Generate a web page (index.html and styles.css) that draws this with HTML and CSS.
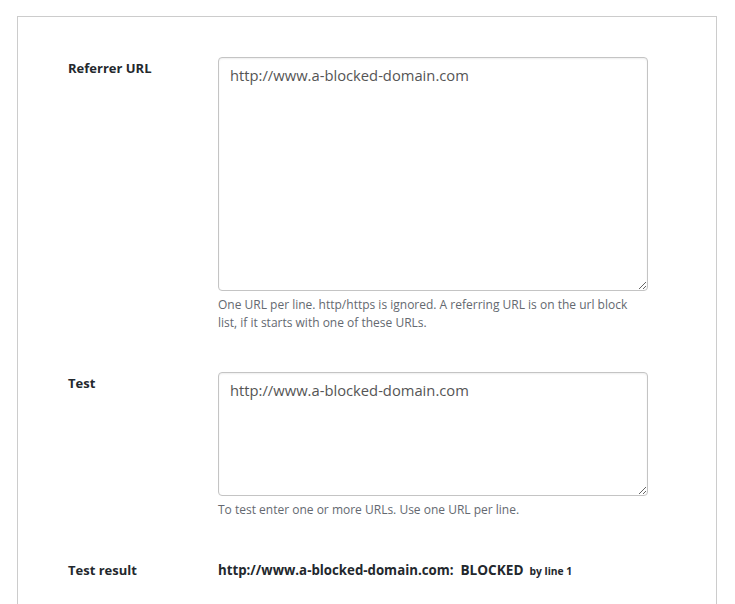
FILE: index.html
```html
<!DOCTYPE html>
<html>
<head>
<meta charset="utf-8">
<link rel="stylesheet" href="styles.css">
</head>
<body>
<div class="page">
  <div class="panel">
    <div class="form">
      <div class="row">
        <div class="label">Referrer URL</div>
        <div class="field">
          <textarea class="input tall">http://www.a-blocked-domain.com</textarea>
          <p class="desc">One URL per line. http/https is ignored. A referring URL is on the url block list, if it starts with one of these URLs.</p>
        </div>
      </div>
      <div class="row">
        <div class="label">Test</div>
        <div class="field">
          <textarea class="input short">http://www.a-blocked-domain.com</textarea>
          <p class="desc">To test enter one or more URLs. Use one URL per line.</p>
        </div>
      </div>
      <div class="row">
        <div class="label">Test result</div>
        <div class="field result">
          <span class="url">http://www.a-blocked-domain.com:</span>
          <span class="status">BLOCKED</span>
          <span class="line">by line 1</span>
        </div>
      </div>
    </div>
  </div>
</div>
</body>
</html>
```

FILE: styles.css
```css
html, body {
  margin: 0;
  padding: 0;
  background: #ffffff;
  overflow: hidden;
}
body {
  font-family: "Open Sans", "Noto Sans", sans-serif;
  color: #32373c;
}
.page {
  padding: 16px 18px 0 17px;
}
.panel {
  box-sizing: border-box;
  border: 1px solid #cccccc;
  border-bottom: none;
  height: 588px;
  padding: 20px 0 0 50px;
}
.form {
  display: flex;
  flex-direction: column;
  gap: 40px;
}
.row {
  display: grid;
  grid-template-columns: 150px 430px;
}
.row:first-child {
  margin-top: 20px;
}
.label {
  font-size: 13px;
  font-weight: 700;
  line-height: 20px;
  padding-top: 1px;
  color: #23282d;
}
.field {
  display: flex;
  flex-direction: column;
}
.input {
  box-sizing: border-box;
  width: 430px;
  margin: 0;
  border: 1px solid #c4c4c4;
  border-radius: 4px;
  box-shadow: inset 0 1px 2px rgba(0, 0, 0, 0.07);
  padding: 7px 11px;
  font-family: "Open Sans", "Noto Sans", sans-serif;
  font-size: 14.75px;
  line-height: 20px;
  color: #555555;
  background: #ffffff;
  resize: both;
}
.tall {
  height: 234px;
}
.short {
  height: 124px;
}
.desc {
  margin: 5px 0 0 0;
  font-size: 12px;
  line-height: 18px;
  color: #646970;
}
.result {
  flex-direction: row;
  align-items: baseline;
  padding-top: 1px;
  line-height: 20px;
  font-weight: 700;
  color: #23282d;
}
.url {
  font-size: 13.25px;
}
.status {
  font-size: 13.6px;
  margin-left: 7px;
}
.line {
  font-size: 10.3px;
  margin-left: 6px;
}
```
